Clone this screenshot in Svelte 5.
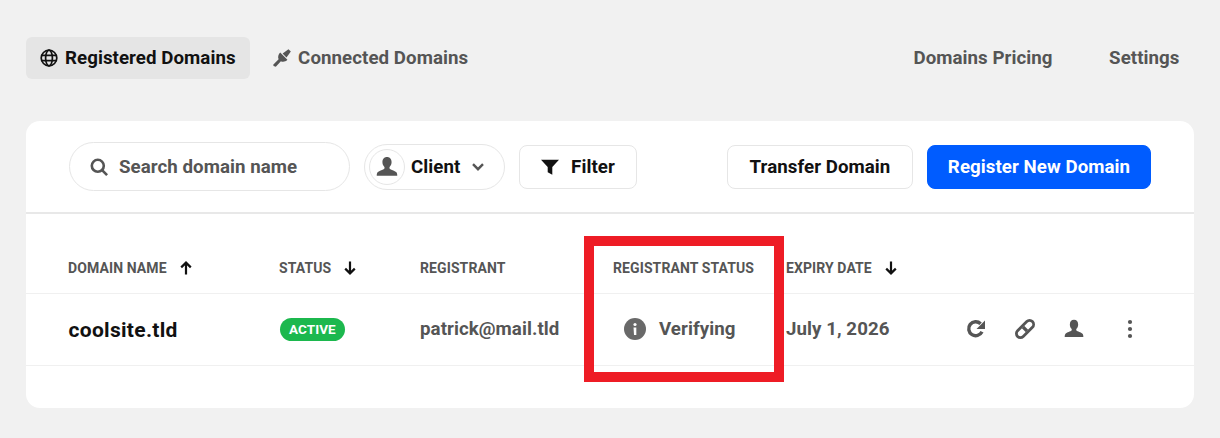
<script lang="ts">
  const columns = [
    { label: 'Domain Name', sort: 'up' },
    { label: 'Status', sort: 'down' },
    { label: 'Registrant', sort: null },
    { label: 'Registrant Status', sort: null },
    { label: 'Expiry Date', sort: 'down' }
  ];
  const personPath = 'M12 1c-3.200 0-5 2.500-5 5.500 0 2.100.8 3.900 2 5.100.5.600.4 1.800-.2 2.500-.8.800-5.300 1.800-7 3.700-.7.800-1 2-1 3.700h22.400c0-1.700-.3-2.900-1-3.700-1.700-1.900-6.200-2.900-7-3.700-.6-.7-.7-1.900-.2-2.500 1.200-1.200 2-3 2-5.100 0-3-1.800-5.500-5-5.500z';
</script>

<div class="page">
  <nav class="tabs">
    <div class="tab-group">
      <button class="tab active">
        <svg width="18" height="18" viewBox="0 0 18 18" fill="none" stroke="currentColor" stroke-width="1.700">
          <circle cx="9" cy="9" r="7.800" />
          <ellipse cx="9" cy="9" rx="3.400" ry="7.800" />
          <path d="M1.500 6.300h15M1.500 11.700h15" />
        </svg>
        Registered Domains
      </button>
      <button class="tab">
        <svg width="18" height="18" viewBox="0 0 18 18" fill="currentColor">
          <path d="M7.200 3.600 14.400 10.800c-1.900 2.100-4.700 2.500-6.500 1.400L2.800 17.800.6 17l-.4-1.300L5.600 10.300C4.600 8.200 5.300 5.300 7.200 3.600z" />
          <path d="M9.600 4.500 15.500.2l2.300 2.400-4.300 5.900z" />
        </svg>
        Connected Domains
      </button>
    </div>
    <div class="tab-group links">
      <button class="tab">Domains Pricing</button>
      <button class="tab">Settings</button>
    </div>
  </nav>

  <section class="card">
    <div class="toolbar">
      <div class="search">
        <svg width="18" height="18" viewBox="0 0 18 18" fill="none" stroke="currentColor" stroke-width="2.600">
          <circle cx="7.800" cy="7.800" r="6" />
          <path d="m12.300 12.300 4.800 4.800" />
        </svg>
        <span>Search domain name</span>
      </div>
      <button class="client">
        <span class="avatar">
          <svg width="22" height="22" viewBox="0 0 24 24" fill="currentColor"><path d={personPath} /></svg>
        </span>
        <span class="client-label">Client</span>
        <svg class="chevron" width="12" height="8" viewBox="0 0 12 8" fill="none" stroke="currentColor" stroke-width="2.400">
          <path d="m1 1.200 5 5 5-5" />
        </svg>
      </button>
      <button class="btn filter">
        <svg width="18" height="16" viewBox="0 0 18 16" fill="currentColor">
          <path d="M0 .8h18l-6.700 7.200v7.700l-4.600-2.500V8z" />
        </svg>
        Filter
      </button>
      <div class="spacer"></div>
      <button class="btn transfer">Transfer Domain</button>
      <button class="btn primary">Register New Domain</button>
    </div>

    <div class="row head">
      {#each columns as col}
        <div class="th">
          {col.label}
          {#if col.sort}
            <svg class:flip={col.sort === 'up'} width="12" height="14" viewBox="0 0 12 14" fill="none" stroke="#111" stroke-width="2.200">
              <path d="M6 .5v12M1.200 7.600 6 12.400l4.800-4.800" />
            </svg>
          {/if}
        </div>
      {/each}
    </div>

    <div class="row body">
      <div class="domain">coolsite.tld</div>
      <div><span class="badge">ACTIVE</span></div>
      <div class="cell">patrick@mail.tld</div>
      <div class="cell verifying">
        <svg width="22" height="22" viewBox="0 0 22 22">
          <circle cx="11" cy="11" r="11" fill="#696969" />
          <circle cx="11" cy="6.500" r="1.600" fill="#fff" />
          <path d="M9.500 9.500h2.800v7.500h-2.300z" fill="#fff" />
        </svg>
        Verifying
      </div>
      <div class="cell">July 1, 2026</div>
      <div class="actions">
        <svg width="20" height="20" viewBox="0 0 20 20" fill="none" stroke="currentColor" stroke-width="3.400">
          <path d="M16 12.800A7 7 0 1 1 14.600 4.700" />
          <path d="M19 1.500v8.500h-8.500z" fill="currentColor" stroke="none" />
        </svg>
        <svg width="20" height="20" viewBox="0 0 20 20" fill="none" stroke="currentColor" stroke-width="2.800">
          <rect x="-.5" y="6" width="21" height="8" rx="4" transform="rotate(-45 10 10)" />
          <path d="m8 8 4 4" stroke-width="3.200" />
        </svg>
        <svg width="20" height="20" viewBox="0 0 24 24" fill="currentColor"><path d={personPath} /></svg>
        <svg class="dots" width="6" height="20" viewBox="0 0 6 20" fill="currentColor">
          <circle cx="3" cy="3" r="2.100" /><circle cx="3" cy="10" r="2.100" /><circle cx="3" cy="17" r="2.100" />
        </svg>
      </div>
    </div>
  </section>

  <div class="highlight"></div>
</div>

<style>
  :global(body) {
    margin: 0;
    background: #f1f1f1;
  }

  .page {
    position: relative;
    height: 438px;
    padding: 37px 26px 0;
    box-sizing: border-box;
    font-family: Roboto, "Liberation Sans", sans-serif;
    letter-spacing: 0.06px;
    color: #555;
  }

  button {
    font: inherit;
    letter-spacing: inherit;
    border: none;
    background: none;
    cursor: pointer;
  }

  .tabs {
    display: flex;
    justify-content: space-between;
    height: 42px;
    margin-bottom: 42px;
  }

  .tab-group {
    display: flex;
    gap: 9px;
  }

  .tab-group.links {
    gap: 28px;
  }

  .tab {
    display: inline-flex;
    align-items: center;
    gap: 7px;
    padding: 0 14.500px 1px 14px;
    border-radius: 6px;
    font-size: 18.700px;
    font-weight: 700;
    color: #555;
  }

  .tab.active {
    background: #e5e5e5;
    color: #111;
  }

  .card {
    height: 287px;
    background: #fff;
    border-radius: 14px;
  }

  .toolbar {
    display: flex;
    align-items: center;
    height: 93px;
    padding: 1px 43px 0;
    border-bottom: 2px solid #e8e8e8;
    box-sizing: border-box;
  }

  .search {
    display: flex;
    align-items: center;
    gap: 11px;
    box-sizing: border-box;
    width: 281px;
    height: 49px;
    padding: 0 0 0 20px;
    margin: -1px 14px 0 0;
    border: 1px solid #e6e6e6;
    border-radius: 25px;
    font-size: 18.700px;
    font-weight: 700;
  }

  .client {
    display: flex;
    align-items: center;
    box-sizing: border-box;
    width: 141px;
    height: 46px;
    padding: 0 0 1px 4px;
    margin-right: 14px;
    border: 1px solid #e6e6e6;
    border-radius: 23px;
    color: #555;
  }

  .avatar {
    display: flex;
    align-items: center;
    justify-content: center;
    height: 36px;
    width: 36px;
    border: 1px solid #e6e6e6;
    border-radius: 50%;
    box-sizing: border-box;
  }

  .client-label {
    margin: 0 12px 0 6px;
    font-size: 18.700px;
    font-weight: 700;
    color: #111;
  }

  .btn {
    display: inline-flex;
    align-items: center;
    justify-content: center;
    box-sizing: border-box;
    height: 44px;
    padding: 0;
    border: 1px solid #e6e6e6;
    border-radius: 8px;
    font-size: 18.700px;
    font-weight: 700;
    color: #111;
  }

  .filter {
    width: 118px;
    gap: 12px;
  }

  .spacer {
    flex: 1;
  }

  .transfer {
    width: 186px;
    margin-right: 14px;
  }

  .primary {
    width: 224px;
    background: #005cff;
    border-color: #005cff;
    color: #fff;
  }

  .row {
    display: grid;
    grid-template-columns: 211px 141px 193px 173px 180px 1fr;
    align-items: center;
    padding-left: 42px;
    border-bottom: 1px solid #f0f0f0;
  }

  .head {
    height: 80px;
    padding-top: 28px;
    box-sizing: border-box;
  }

  .body {
    height: 72px;
    box-sizing: border-box;
  }

  .th {
    display: flex;
    align-items: center;
    gap: 13px;
    font-size: 14px;
    font-weight: 700;
    letter-spacing: 0.1px;
    text-transform: uppercase;
    white-space: nowrap;
  }

  .th svg.flip {
    transform: rotate(180deg);
  }

  .domain {
    padding-left: 0.5px;
    font-size: 21px;
    font-weight: 700;
    letter-spacing: 0.3px;
    color: #111;
  }

  .badge {
    display: inline-block;
    margin-left: 0.5px;
    padding: 0 9.500px;
    height: 23px;
    line-height: 23px;
    border-radius: 12px;
    background: #1cb84e;
    color: #fff;
    font-size: 13.500px;
    font-weight: 700;
  }

  .cell {
    padding-bottom: 1px;
    font-size: 18.700px;
    font-weight: 700;
    white-space: nowrap;
  }

  .verifying {
    display: flex;
    align-items: center;
    gap: 13px;
    padding-left: 11px;
  }

  .actions {
    display: flex;
    align-items: center;
    gap: 29px;
    padding-bottom: 1px;
    color: #555;
  }

  .actions .dots {
    margin-left: 14px;
  }

  .highlight {
    position: absolute;
    left: 584px;
    top: 236px;
    width: 200px;
    height: 146px;
    box-sizing: border-box;
    border: 10px solid #ee1c25;
  }
</style>
